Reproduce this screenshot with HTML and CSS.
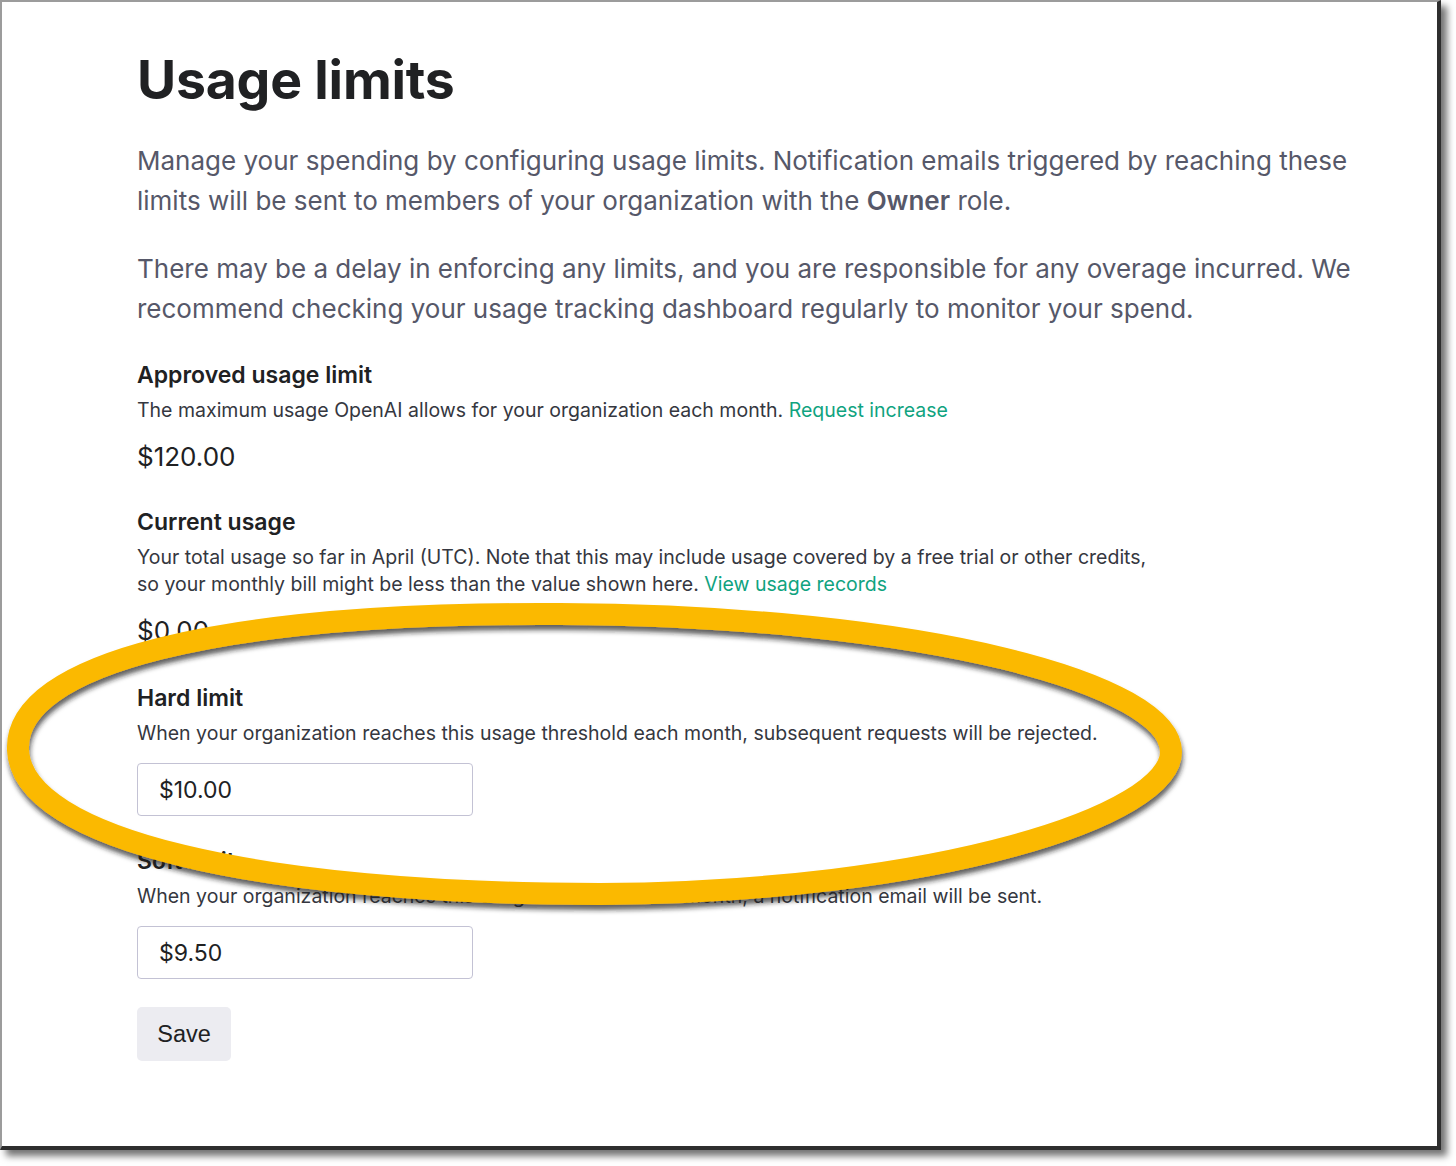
FILE: index.html
```html
<!DOCTYPE html>
<html lang="en">
<head>
<meta charset="utf-8">
<title>Usage limits</title>
<link rel="stylesheet" href="styles.css">
</head>
<body>
<div class="frame">
  <main class="content">
    <h1 class="title">Usage limits</h1>
    <p class="lead">Manage your spending by configuring usage limits. Notification emails triggered by reaching these limits will be sent to members of your organization with the <strong>Owner</strong> role.</p>
    <p class="lead">There may be a delay in enforcing any limits, and you are responsible for any overage incurred. We recommend checking your usage tracking dashboard regularly to monitor your spend.</p>

    <section class="block first">
      <h2 class="block-title">Approved usage limit</h2>
      <p class="block-desc">The maximum usage OpenAI allows for your organization each month. <a class="link" href="#">Request increase</a></p>
      <div class="amount">$120.00</div>
    </section>

    <section class="block">
      <h2 class="block-title">Current usage</h2>
      <p class="block-desc narrow">Your total usage so far in April (UTC). Note that this may include usage covered by a free trial or other credits, so your monthly bill might be less than the value shown here. <a class="link" href="#">View usage records</a></p>
      <div class="amount">$0.00</div>
    </section>

    <section class="block field-block">
      <h2 class="block-title">Hard limit</h2>
      <p class="block-desc">When your organization reaches this usage threshold each month, subsequent requests will be rejected.</p>
      <input class="field" type="text" value="$10.00">
    </section>

    <section class="block field-block">
      <h2 class="block-title">Soft limit</h2>
      <p class="block-desc">When your organization reaches this usage threshold each month, a notification email will be sent.</p>
      <input class="field" type="text" value="$9.50">
    </section>

    <button class="save" type="button">Save</button>
  </main>

  <svg class="highlight" width="1456" height="1166" viewBox="0 0 1456 1166" aria-hidden="true">
    <defs>
      <filter id="shadow" x="-10%" y="-20%" width="120%" height="140%">
        <feDropShadow dx="1" dy="5" stdDeviation="2.5" flood-color="#1a1a1a" flood-opacity="0.7"/>
      </filter>
    </defs>
    <path d="M 18 750 C 14 663, 220 612, 560 614 C 930 616, 1171 685, 1171 752 C 1171 815, 940 892, 600 894 C 260 894, 22 840, 18 750 Z"
          fill="none" stroke="#fbb901" stroke-width="22" filter="url(#shadow)"/>
  </svg>
</div>
</body>
</html>
```

FILE: styles.css
```css
html, body {
  margin: 0;
  padding: 0;
  background: #ffffff;
}

body {
  width: 1456px;
  height: 1166px;
  overflow: hidden;
  font-family: "Inter", "Noto Sans", sans-serif;
}

.frame {
  position: relative;
  box-sizing: border-box;
  width: 1441px;
  height: 1150px;
  border-top: 2px solid #9c9c9c;
  border-left: 2px solid #9c9c9c;
  border-right: 4px solid #2e2e2e;
  border-bottom: 4px solid #2e2e2e;
  box-shadow: 6px 6px 7px rgba(0, 0, 0, 0.55);
  background: #ffffff;
}

.content {
  padding: 46px 0 0 135px;
  display: flex;
  flex-direction: column;
  align-items: flex-start;
}

.title {
  margin: 0 0 29px;
  font-size: 53.5px;
  line-height: 64px;
  font-weight: 700;
  color: #202123;
  letter-spacing: -0.2px;
}

.lead {
  margin: 0 0 28px;
  width: 1240px;
  font-size: 26px;
  line-height: 40px;
  color: #565869;
  font-weight: 400;
}

.lead strong {
  font-weight: 600;
  color: #565869;
}

.block {
  display: flex;
  flex-direction: column;
  align-items: flex-start;
  margin-bottom: 32px;
}

.block.first {
  margin-top: 3px;
}

.block.field-block {
  margin-bottom: 28px;
}

.block-title {
  margin: 0 0 7px;
  font-size: 23px;
  line-height: 30px;
  font-weight: 600;
  color: #202123;
}

.block-desc {
  margin: 0 0 15px;
  font-size: 19.5px;
  line-height: 27px;
  color: #353740;
}

.field-block .block-title {
  margin-top: 2px;
}

.field-block .block-desc {
  margin-bottom: 16px;
}

.block-desc.narrow {
  width: 1022px;
}

.link {
  color: #10a37f;
  text-decoration: none;
}

.amount {
  font-size: 26px;
  line-height: 36px;
  color: #202123;
}

.field {
  box-sizing: border-box;
  width: 336px;
  height: 53px;
  padding: 0 21px;
  border: 1.5px solid #c3c2d4;
  border-radius: 4px;
  font-family: "Inter", "Noto Sans", sans-serif;
  font-size: 23px;
  color: #202123;
  background: #ffffff;
  outline: none;
}

.save {
  box-sizing: border-box;
  width: 94px;
  height: 54px;
  padding: 0;
  border: none;
  border-radius: 5px;
  background: #ececf1;
  color: #202123;
  font-family: "Liberation Sans", Arial, sans-serif;
  font-size: 23.5px;
}

.highlight {
  position: absolute;
  left: -2px;
  top: -2px;
  pointer-events: none;
}
```
